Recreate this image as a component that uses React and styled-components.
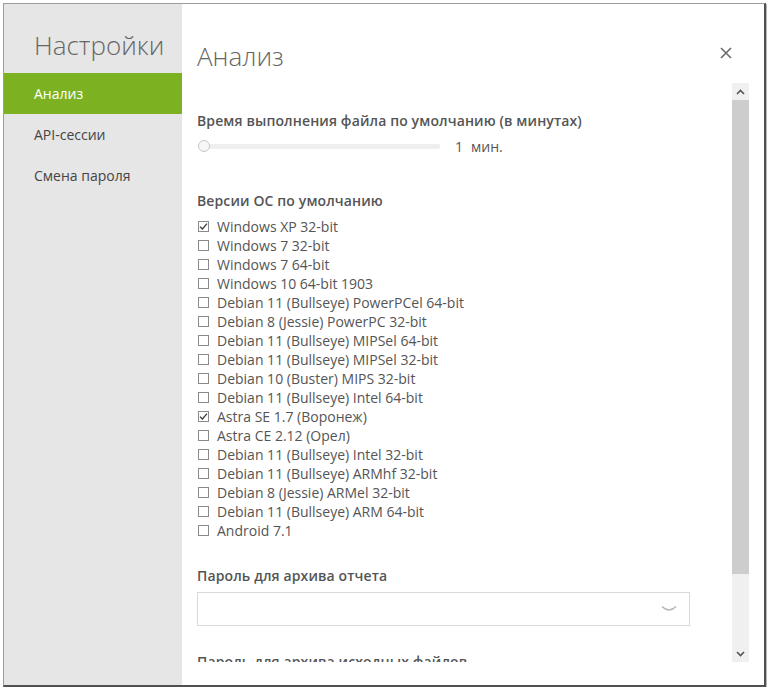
import React from "react";
import styled, { createGlobalStyle } from "styled-components";

const Global = createGlobalStyle`
  html, body { margin: 0; padding: 0; background: #ffffff; }
  body { font-family: "Open Sans", "Noto Sans", "Liberation Sans", sans-serif; }
  * { box-sizing: border-box; }
`;

const Page = styled.div`
  padding: 3px 0 0 3px;
`;

const Frame = styled.div`
  width: 763px;
  height: 684px;
  display: flex;
  border-left: 1px solid #9c9c9c;
  border-top: 1px solid #9c9c9c;
  border-right: 2px solid #505050;
  border-bottom: 2px solid #505050;
  box-shadow: 1px 1px 0 #b8b8b8;
  background: #fff;
  overflow: hidden;
`;

const Sidebar = styled.nav`
  width: 178px;
  flex: none;
  background: #e6e6e6;
  padding-top: 23px;
  display: flex;
  flex-direction: column;
`;

const SideTitle = styled.div`
  font-size: 26px;
  font-weight: 300;
  line-height: 36px;
  color: #666;
  padding-left: 30px;
  margin-bottom: 10px;
`;

const MenuItem = styled.div`
  height: 41px;
  line-height: 41px;
  padding-left: 30px;
  font-size: 14px;
  color: ${(p) => (p.$active ? "#fff" : "#444")};
  background: ${(p) => (p.$active ? "#7cb222" : "transparent")};
`;

const Main = styled.main`
  flex: 1;
  display: flex;
  flex-direction: column;
  min-width: 0;
`;

const Header = styled.header`
  height: 79px;
  flex: none;
  display: flex;
  justify-content: space-between;
  align-items: flex-start;
  padding: 34px 32px 0 15px;
`;

const Title = styled.h1`
  margin: 0;
  font-size: 26px;
  font-weight: 300;
  line-height: 36px;
  color: #666;
`;

const Close = styled.button`
  margin-top: 9px;
  width: 12px;
  height: 12px;
  padding: 0;
  border: 0;
  background: none;
  display: flex;
  svg { display: block; }
`;

const ScrollRow = styled.div`
  height: 579px;
  flex: none;
  display: flex;
  padding-right: 15px;
`;

const Content = styled.div`
  flex: 1;
  overflow: hidden;
  padding: 28px 0 0 15px;
  display: flex;
  flex-direction: column;
  & > * { flex-shrink: 0; }
`;

const Scrollbar = styled.div`
  width: 17px;
  flex: none;
  display: flex;
  flex-direction: column;
  background: #f0f0f0;
`;

const ScrollBtn = styled.div`
  height: 17px;
  flex: none;
  display: flex;
  align-items: center;
  justify-content: center;
  background: #f0f0f0;
`;

const Thumb = styled.div`
  height: 474px;
  flex: none;
  background: #cdcdcd;
`;

const Track = styled.div`
  flex: 1;
`;

const SectionTitle = styled.div`
  font-size: 14px;
  font-weight: 600;
  letter-spacing: 0.12px;
  line-height: 20px;
  color: #555;
  margin-top: ${(p) => p.$mt || 0}px;
`;

const SliderRow = styled.div`
  display: flex;
  align-items: center;
  height: 20px;
  margin-top: 5px;
`;

const SliderTrack = styled.div`
  position: relative;
  width: 242px;
  height: 5px;
  margin-left: 1px;
  background: #efefef;
  border-radius: 2px;
`;

const SliderThumb = styled.div`
  position: absolute;
  left: 0;
  top: -4px;
  width: 12px;
  height: 12px;
  border-radius: 50%;
  background: #f7f7f7;
  border: 1px solid #c8c8c8;
`;

const SliderValue = styled.div`
  margin-left: 15px;
  font-size: 14px;
  color: #555;
  display: flex;
  gap: 8px;
`;

const List = styled.div`
  margin-top: 6px;
  display: flex;
  flex-direction: column;
`;

const Option = styled.label`
  display: flex;
  align-items: center;
  height: 19px;
  font-size: 14px;
  line-height: 19px;
  color: #555;
`;

const Box = styled.span`
  width: 11px;
  height: 11px;
  border: 1px solid #8a8a8a;
  background: #fff;
  margin-left: 1px;
  margin-right: 8px;
  display: flex;
  align-items: center;
  justify-content: center;
  flex: none;
  svg { display: block; }
`;

const Input = styled.div`
  margin-top: 6px;
  width: 493px;
  height: 34px;
  border: 1px solid #d9d9d9;
  display: flex;
  align-items: center;
  justify-content: flex-end;
  padding-right: 12px;
`;

const oses = [
  ["Windows XP 32-bit", true],
  ["Windows 7 32-bit"],
  ["Windows 7 64-bit"],
  ["Windows 10 64-bit 1903"],
  ["Debian 11 (Bullseye) PowerPCel 64-bit"],
  ["Debian 8 (Jessie) PowerPC 32-bit"],
  ["Debian 11 (Bullseye) MIPSel 64-bit"],
  ["Debian 11 (Bullseye) MIPSel 32-bit"],
  ["Debian 10 (Buster) MIPS 32-bit"],
  ["Debian 11 (Bullseye) Intel 64-bit"],
  ["Astra SE 1.7 (Воронеж)", true],
  ["Astra CE 2.12 (Орел)"],
  ["Debian 11 (Bullseye) Intel 32-bit"],
  ["Debian 11 (Bullseye) ARMhf 32-bit"],
  ["Debian 8 (Jessie) ARMel 32-bit"],
  ["Debian 11 (Bullseye) ARM 64-bit"],
  ["Android 7.1"],
];

const Check = () => (
  <svg width="9" height="9" viewBox="0 0 9 9">
    <path d="M1 4.6 L3.4 7 L8 1.6" fill="none" stroke="#333" strokeWidth="1.2" />
  </svg>
);

export default function App() {
  return (
    <>
      <Global />
      <Page>
        <Frame>
          <Sidebar>
            <SideTitle>Настройки</SideTitle>
            <MenuItem $active>Анализ</MenuItem>
            <MenuItem>API-сессии</MenuItem>
            <MenuItem>Смена пароля</MenuItem>
          </Sidebar>
          <Main>
            <Header>
              <Title>Анализ</Title>
              <Close aria-label="close">
                <svg width="12" height="12" viewBox="0 0 12 12">
                  <path d="M1 1 L11 11 M11 1 L1 11" stroke="#6a6a6a" strokeWidth="1.6" />
                </svg>
              </Close>
            </Header>
            <ScrollRow>
              <Content>
                <SectionTitle>Время выполнения файла по умолчанию (в минутах)</SectionTitle>
                <SliderRow>
                  <SliderTrack>
                    <SliderThumb />
                  </SliderTrack>
                  <SliderValue>
                    <span>1</span>
                    <span>мин.</span>
                  </SliderValue>
                </SliderRow>
                <SectionTitle $mt={35}>Версии ОС по умолчанию</SectionTitle>
                <List>
                  {oses.map(([name, checked]) => (
                    <Option key={name}>
                      <Box>{checked && <Check />}</Box>
                      {name}
                    </Option>
                  ))}
                </List>
                <SectionTitle $mt={26}>Пароль для архива отчета</SectionTitle>
                <Input>
                  <svg width="16" height="8" viewBox="0 0 16 8">
                    <path d="M1 1.5 Q8 8.5 15 1.5" fill="none" stroke="#b5b5b5" strokeWidth="1.4" />
                  </svg>
                </Input>
                <SectionTitle $mt={26}>Пароль для архива исходных файлов</SectionTitle>
              </Content>
              <Scrollbar>
                <ScrollBtn>
                  <svg width="9" height="6" viewBox="0 0 9 6">
                    <path d="M1 5 L4.5 1.5 L8 5" fill="none" stroke="#555" strokeWidth="1.6" />
                  </svg>
                </ScrollBtn>
                <Thumb />
                <Track />
                <ScrollBtn>
                  <svg width="9" height="6" viewBox="0 0 9 6">
                    <path d="M1 1 L4.5 4.5 L8 1" fill="none" stroke="#555" strokeWidth="1.6" />
                  </svg>
                </ScrollBtn>
              </Scrollbar>
            </ScrollRow>
          </Main>
        </Frame>
      </Page>
    </>
  );
}
